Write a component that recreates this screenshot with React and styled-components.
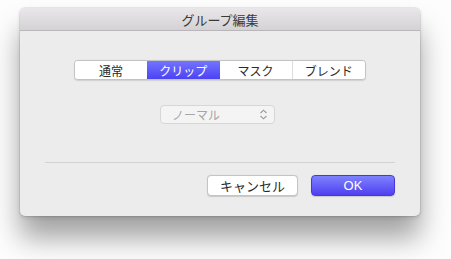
import React from 'react';
import styled, {createGlobalStyle} from 'styled-components';


const Global = createGlobalStyle`
  html, body {
    margin: 0;
    height: 100%;
    background: #fdfdfd;
  }
  body {
    font-family: 'Noto Sans CJK JP', 'Liberation Sans', sans-serif;
    padding-top: 8px;
    box-sizing: border-box;
  }
`;


const Window = styled.div`
  margin-left: 20px;
  width: 400px;
  height: 208px;
  box-sizing: border-box;
  background: #ececec;
  border-radius: 5px;
  overflow: hidden;
  display: flex;
  flex-direction: column;
  box-shadow: 0 0 0 1px rgba(0, 0, 0, .07), 0 2px 4px rgba(0, 0, 0, .12), 0 22px 28px rgba(0, 0, 0, .36);
`;

const TitleBar = styled.div`
  height: 22px;
  flex: none;
  border-bottom: 1px solid #b8b6b8;
  background: linear-gradient(#e9e7e9, #d4d2d4);
  display: flex;
  align-items: center;
  justify-content: center;
  font-size: 13px;
  color: #3a3a3a;
`;

const Body = styled.div`
  flex: 1;
  display: flex;
  flex-direction: column;
  align-items: center;
  padding-top: 29px;
`;

const Segments = styled.div`
  display: flex;
  width: 292px;
  height: 20px;
  box-sizing: border-box;
  border: 1px solid #c3c3c3;
  border-radius: 4px;
  background: #fff;
  overflow: hidden;
  box-shadow: 0 .5px 1px rgba(0, 0, 0, .12);
`;

const Segment = styled.div`
  flex: 1;
  display: flex;
  align-items: center;
  justify-content: center;
  font-size: 12px;
  color: ${p => p.active ? '#fff' : '#2a2a2a'};
  background: ${p => p.active ? 'linear-gradient(#7474ff, #4c43f3)' : '#fff'};
  border-bottom: ${p => p.active ? '1px solid #3725c9' : 'none'};
  border-left: ${p => p.first || p.active || p.afterActive ? 'none' : '1px solid #dcdcdc'};
  margin-bottom: ${p => p.active ? '-1px' : '0'};
`;

const Popup = styled.div`
  margin: 25px 5px 0 0;
  width: 115px;
  height: 19px;
  box-sizing: border-box;
  border: 1px solid #d6d6d6;
  border-radius: 4px;
  background: #f4f4f4;
  display: flex;
  align-items: center;
  justify-content: space-between;
  padding: 0 6px 0 11px;
  font-size: 12px;
  color: #a5a5a5;
`;

const Divider = styled.div`
  margin-top: 38px;
  width: 350px;
  height: 1px;
  background: #d2d2d2;
`;

const Buttons = styled.div`
  align-self: stretch;
  display: flex;
  justify-content: flex-end;
  gap: 13px;
  padding: 12px 25px 0 0;
`;

const Button = styled.div`
  width: ${p => p.w}px;
  height: 21px;
  box-sizing: border-box;
  border-radius: 4px;
  display: flex;
  align-items: center;
  justify-content: center;
  font-size: 13px;
  font-family: ${p => p.primary ? "'Liberation Sans', sans-serif" : 'inherit'};
  color: ${p => p.primary ? '#fff' : '#2a2a2a'};
  background: ${p => p.primary ? 'linear-gradient(#7f82ff, #4f3ff0)' : '#fff'};
  border: 1px solid ${p => p.primary ? '#4a37d8' : '#c4c4c4'};
  box-shadow: 0 .5px 1px rgba(0, 0, 0, .15);
`;


const Chevron = () =>
  <svg width='9' height='11' viewBox='0 0 9 11'>
    <path d='M1.5 4 L4.5 1.2 L7.5 4 M1.5 7 L4.5 9.8 L7.5 7'
      fill='none' stroke='#9a9a9a' strokeWidth='1.1' />
  </svg>;


const tabs = ['通常', 'クリップ', 'マスク', 'ブレンド'];

const App = () =>
  <>
    <Global />
    <Window>
      <TitleBar>グループ編集</TitleBar>
      <Body>
        <Segments>
          {tabs.map((t, i) =>
            <Segment key={t} first={i === 0} active={i === 1} afterActive={i === 2}>{t}</Segment>
          )}
        </Segments>
        <Popup>
          ノーマル
          <Chevron />
        </Popup>
        <Divider />
        <Buttons>
          <Button w={91}>キャンセル</Button>
          <Button w={84} primary>OK</Button>
        </Buttons>
      </Body>
    </Window>
  </>;

export default App;
